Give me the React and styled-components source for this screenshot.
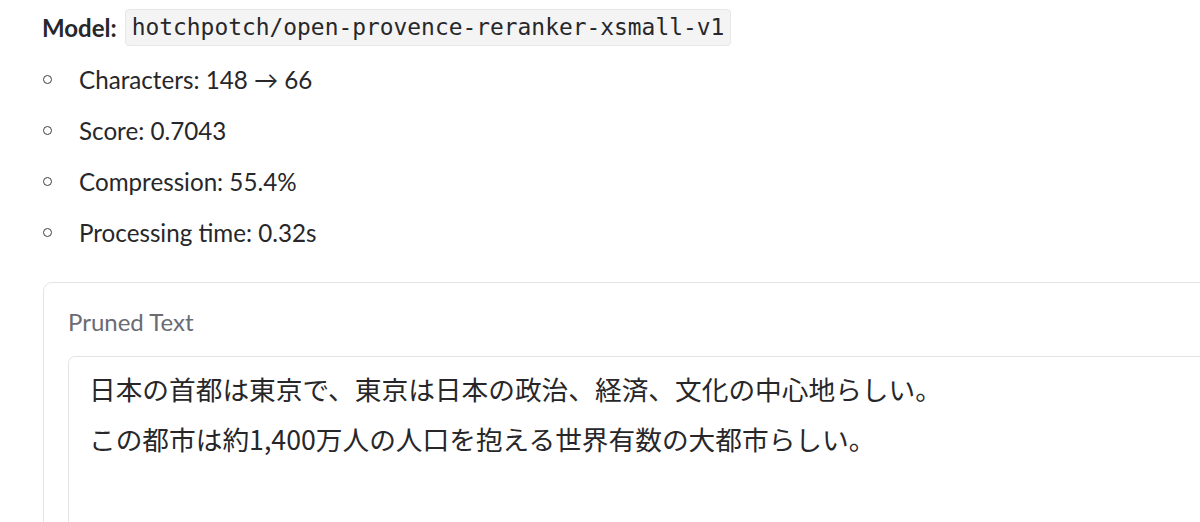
import React from 'react'
import styled, { createGlobalStyle } from 'styled-components'

const GlobalStyle = createGlobalStyle`
  html, body {
    margin: 0;
    padding: 0;
    background: #ffffff;
    overflow: hidden;
  }
  body {
    font-family: Lato, "Noto Sans", "Noto Sans CJK JP", sans-serif;
    color: #27272a;
  }
`

const Page = styled.div`
  padding: 9px 0 0 42px;
  width: 1400px;
`

const ModelRow = styled.div`
  display: flex;
  align-items: center;
  gap: 8px;
  font-size: 24px;
  height: 37px;
`

const Strong = styled.span`
  font-weight: 700;
`

const Code = styled.code`
  font-family: "DejaVu Sans Mono", "Liberation Mono", monospace;
  font-size: 22.9px;
  background: #f4f4f5;
  border: 1px solid #e7e7e9;
  border-radius: 4px;
  padding: 4px 6px;
  line-height: 27px;
  color: #27272a;
`

const Stats = styled.ul`
  list-style: none;
  margin: 8px 0 0 0;
  padding: 0;
`

const Stat = styled.li`
  display: flex;
  align-items: center;
  height: 51px;
  font-size: 24.2px;
`

const Bullet = styled.span`
  width: 7px;
  height: 7px;
  border: 1.3px solid #3f3f46;
  border-radius: 50%;
  margin: 0 27px 0 1px;
  flex-shrink: 0;
`

const Block = styled.div`
  margin-top: 24px;
  margin-left: 1px;
  border: 1.5px solid #e4e4e7;
  border-radius: 9px;
  padding: 24px 0 0 24px;
  height: 300px;
`

const Label = styled.div`
  font-size: 24px;
  color: #6b6b73;
  line-height: 30px;
  margin-bottom: 19px;
`

const TextArea = styled.div`
  border: 1.5px solid #e4e4e7;
  border-radius: 7px;
  padding: 7px 20px;
  height: 260px;
  font-family: "Noto Sans CJK JP", sans-serif;
  font-size: 26.7px;
  line-height: 50px;
  color: #27272a;
`

const stats = [
  'Characters: 148 → 66',
  'Score: 0.7043',
  'Compression: 55.4%',
  'Processing time: 0.32s',
]

const lines = [
  '日本の首都は東京で、東京は日本の政治、経済、文化の中心地らしい。',
  'この都市は約1,400万人の人口を抱える世界有数の大都市らしい。',
]

export default function App() {
  return (
    <Page>
      <GlobalStyle />
      <ModelRow>
        <Strong>Model:</Strong>
        <Code>hotchpotch/open-provence-reranker-xsmall-v1</Code>
      </ModelRow>
      <Stats>
        {stats.map((s) => (
          <Stat key={s}>
            <Bullet />
            {s}
          </Stat>
        ))}
      </Stats>
      <Block>
        <Label>Pruned Text</Label>
        <TextArea>
          {lines.map((l) => (
            <div key={l}>{l}</div>
          ))}
        </TextArea>
      </Block>
    </Page>
  )
}
